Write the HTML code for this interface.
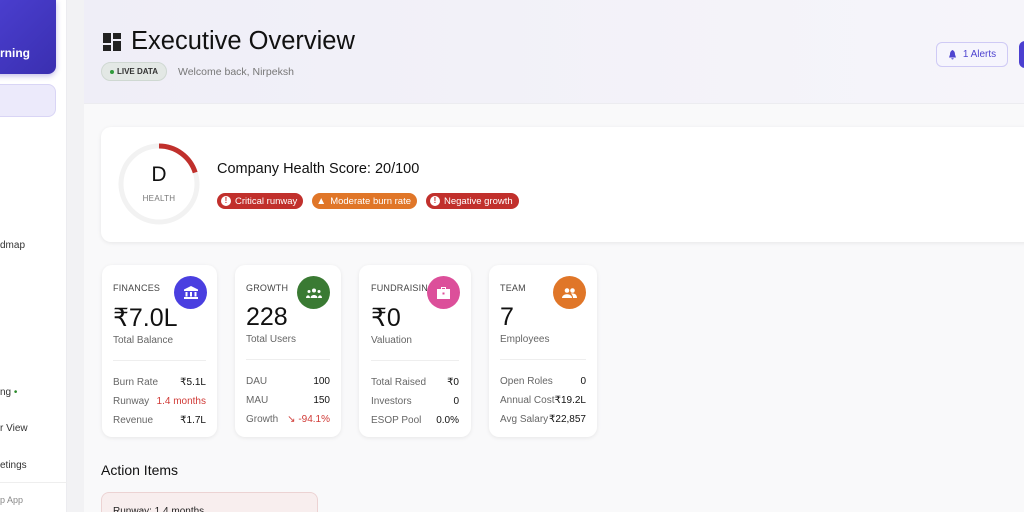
<!DOCTYPE html>
<html style="height:512px;overflow:hidden"><head><meta charset="utf-8"><style>
*{box-sizing:border-box;margin:0;padding:0}
body{width:1024px;height:512px;overflow:hidden;font-family:"Liberation Sans",sans-serif;background:#f9f9fa;position:relative;color:#111}
.abs{position:absolute}
.side{left:0;top:0;width:67px;height:512px;background:#fff;border-right:1px solid #ececf0}
.gap{left:67px;top:0;width:17px;height:512px;background:#f2f2f4}
.hdr{left:84px;top:0;width:940px;height:104px;background:linear-gradient(90deg,#efeef7,#f6f5fa);border-bottom:1px solid #ececf0}
.card{background:#fff;border-radius:10px;box-shadow:0 1px 4px rgba(0,0,0,.08)}
.stat{top:265px;height:172px}
.lbl{font-size:9px;color:#444;letter-spacing:.2px}
.big{font-size:25px;color:#111}
.sub{font-size:10px;color:#666}
.row{display:flex;justify-content:space-between;font-size:10px;color:#666;margin-top:8px;white-space:nowrap}
.row b{font-weight:normal;color:#111}
.ic{width:33px;height:33px;border-radius:50%;position:absolute;top:11px;display:flex;align-items:center;justify-content:center}
.pill{display:inline-flex;align-items:center;gap:4px;height:16px;border-radius:8px;padding:0 6px 0 4px;font-size:9.5px;color:#fff;margin-right:9px}
.dot{width:10px;height:10px;border-radius:50%;background:#fff;color:#c33;font-size:8px;font-weight:bold;text-align:center;line-height:10px}
</style></head><body>
<div class="abs side">
 <div class="abs" style="left:-10px;top:0;width:66px;height:74px;background:linear-gradient(135deg,#4b3fd0,#3a2fb0);border-radius:0 0 8px 0;box-shadow:0 2px 6px rgba(60,40,180,.3)"></div>
 <div class="abs" style="left:0;top:46px;color:#fff;font-size:12px;font-weight:bold">rning</div>
 <div class="abs" style="left:-10px;top:84px;width:66px;height:33px;background:#eceafb;border:1px solid #d9d5f5;border-radius:8px"></div>
 <div class="abs" style="left:0;top:240px;font-size:10px;color:#333">dmap</div>
 <div class="abs" style="left:0;top:387px;font-size:10px;color:#333">ng <span style="color:#2a8a2a">•</span></div>
 <div class="abs" style="left:0;top:423px;font-size:10px;color:#333">r View</div>
 <div class="abs" style="left:0;top:460px;font-size:10px;color:#333">etings</div>
 <div class="abs" style="left:0;top:482px;width:67px;border-top:1px solid #eee"></div>
 <div class="abs" style="left:0;top:495px;font-size:9px;color:#888">p App</div>
</div>
<div class="abs gap"></div>
<div class="abs hdr"></div>
<svg class="abs" style="left:103px;top:33px" width="18" height="18" viewBox="0 0 18 18" fill="#222"><rect x="0" y="0" width="8" height="10"/><rect x="10" y="0" width="8" height="6"/><rect x="0" y="12" width="8" height="6"/><rect x="10" y="8" width="8" height="10"/></svg>
<div class="abs" style="left:131px;top:27px;font-size:25.5px;color:#111">Executive Overview</div>
<div class="abs" style="left:101px;top:62px;width:66px;height:19px;border-radius:10px;background:#e3e8e5;border:1px solid #cfd8d2;font-size:8px;font-weight:bold;color:#333;display:flex;align-items:center;justify-content:center;gap:3px"><span style="width:4px;height:4px;border-radius:50%;background:#2f9a3a;display:inline-block"></span>LIVE DATA</div>
<div class="abs" style="left:178px;top:66px;font-size:10.5px;color:#777">Welcome back, Nirpeksh</div>
<div class="abs" style="left:936px;top:42px;width:72px;height:25px;border:1px solid #cfcaf5;border-radius:6px;background:#f6f5fd;font-size:10px;color:#4f44d0;display:flex;align-items:center;justify-content:center;gap:6px"><svg width="9" height="10" viewBox="0 0 9 10" fill="#4f44d0"><path d="M4.5 0C2.5 1 2 2.5 2 4.5L1 7.5H8L7 4.5C7 2.5 6.5 1 4.5 0ZM3.3 8.3H5.7A1.2 1.2 0 0 1 3.3 8.3Z"/></svg>1 Alerts</div>
<div class="abs" style="left:1019px;top:41px;width:12px;height:27px;background:#4b3fd0;border-radius:6px"></div>

<div class="abs card" style="left:101px;top:127px;width:940px;height:115px"></div>
<svg class="abs" style="left:117px;top:142px" width="84" height="84" viewBox="0 0 84 84"><circle cx="42" cy="42" r="38" fill="none" stroke="#f2f2f2" stroke-width="5"/><path d="M42 4A38 38 0 0 1 78.2 30.5" fill="none" stroke="#c0302c" stroke-width="5"/></svg>
<div class="abs" style="left:117px;top:163px;width:84px;text-align:center;font-size:21px">D</div>
<div class="abs" style="left:117px;top:194px;width:84px;text-align:center;font-size:8px;color:#777;letter-spacing:.3px">HEALTH</div>
<div class="abs" style="left:217px;top:161px;font-size:14.5px;color:#111">Company Health Score: 20/100</div>
<div class="abs" style="left:217px;top:193px;display:flex">
 <span class="pill" style="background:#c1302c"><span class="dot">!</span>Critical runway</span>
 <span class="pill" style="background:#e07628"><span style="color:#fff;font-size:10px">▲</span>Moderate burn rate</span>
 <span class="pill" style="background:#c1302c"><span class="dot">!</span>Negative growth</span>
</div>

<div class="abs card stat" style="left:102px;width:115px;padding:12px 11px">
 <div class="lbl" style="margin-top:6px">FINANCES</div>
 <div class="ic" style="left:72px;background:#4a3fe0"><svg width="14" height="13" viewBox="0 0 14 13" fill="#fff"><path d="M7 0L0 3.5V5H14V3.5Z"/><rect x="1.5" y="6" width="2" height="4.5"/><rect x="6" y="6" width="2" height="4.5"/><rect x="10.5" y="6" width="2" height="4.5"/><rect x="0" y="11" width="14" height="2"/></svg></div>
 <div class="big" style="margin-top:10px">₹7.0L</div>
 <div class="sub" style="margin-top:2px">Total Balance</div>
 <div style="border-top:1px solid #eee;margin-top:14px;padding-top:8px">
 <div class="row"><span>Burn Rate</span><b>₹5.1L</b></div>
 <div class="row"><span>Runway</span><b style="color:#d03a36">1.4 months</b></div>
 <div class="row"><span>Revenue</span><b>₹1.7L</b></div></div>
</div>
<div class="abs card stat" style="left:235px;width:106px;padding:12px 11px">
 <div class="lbl" style="margin-top:6px">GROWTH</div>
 <div class="ic" style="left:62px;background:#3a7a33"><svg width="16" height="10" viewBox="0 0 16 10" fill="#fff"><circle cx="8" cy="2.5" r="2"/><circle cx="3" cy="3.5" r="1.5"/><circle cx="13" cy="3.5" r="1.5"/><path d="M4.5 10C4.5 6 11.5 6 11.5 10Z"/><path d="M0 10C0 6.5 4 6.5 4 10Z"/><path d="M12 10C12 6.5 16 6.5 16 10Z"/></svg></div>
 <div class="big" style="margin-top:10px">228</div>
 <div class="sub" style="margin-top:2px">Total Users</div>
 <div style="border-top:1px solid #eee;margin-top:14px;padding-top:8px">
 <div class="row"><span>DAU</span><b>100</b></div>
 <div class="row"><span>MAU</span><b>150</b></div>
 <div class="row"><span>Growth</span><b style="color:#d03a36">↘ -94.1%</b></div></div>
</div>
<div class="abs card stat" style="left:359px;width:112px;padding:12px 12px">
 <div class="lbl" style="margin-top:6px">FUNDRAISING</div>
 <div class="ic" style="left:68px;background:#dc4f9a"><svg width="13" height="12" viewBox="0 0 13 12" fill="#fff"><path d="M4 0H9V2H13V12H0V2H4ZM5 1V2H8V1Z"/><rect x="5.5" y="5.5" width="2" height="2" fill="#dc4f9a"/></svg></div>
 <div class="big" style="margin-top:10px">₹0</div>
 <div class="sub" style="margin-top:2px">Valuation</div>
 <div style="border-top:1px solid #eee;margin-top:14px;padding-top:8px">
 <div class="row"><span>Total Raised</span><b>₹0</b></div>
 <div class="row"><span>Investors</span><b>0</b></div>
 <div class="row"><span>ESOP Pool</span><b>0.0%</b></div></div>
</div>
<div class="abs card stat" style="left:489px;width:108px;padding:12px 11px">
 <div class="lbl" style="margin-top:6px">TEAM</div>
 <div class="ic" style="left:64px;background:#e07628"><svg width="15" height="10" viewBox="0 0 15 10" fill="#fff"><circle cx="5" cy="2.5" r="2.3"/><circle cx="10.5" cy="2.5" r="2.3"/><path d="M0 10C0 5 10 5 10 10Z"/><path d="M9 5.5C13 5 15 7 15 10H11C11 8 10 6.5 9 5.5Z"/></svg></div>
 <div class="big" style="margin-top:10px">7</div>
 <div class="sub" style="margin-top:2px">Employees</div>
 <div style="border-top:1px solid #eee;margin-top:14px;padding-top:8px">
 <div class="row"><span>Open Roles</span><b>0</b></div>
 <div class="row"><span>Annual Cost</span><b>₹19.2L</b></div>
 <div class="row"><span>Avg Salary</span><b>₹22,857</b></div></div>
</div>
<div class="abs" style="left:101px;top:462px;font-size:14px;color:#111">Action Items</div>
<div class="abs" style="left:101px;top:492px;width:217px;height:20px;background:#f8eeee;border:1px solid #ecd3d3;border-bottom:none;border-radius:8px 8px 0 0;overflow:hidden"><div style="position:absolute;left:11px;top:13px;font-size:10px;color:#222">Runway: 1.4 months</div></div>
</body></html>
